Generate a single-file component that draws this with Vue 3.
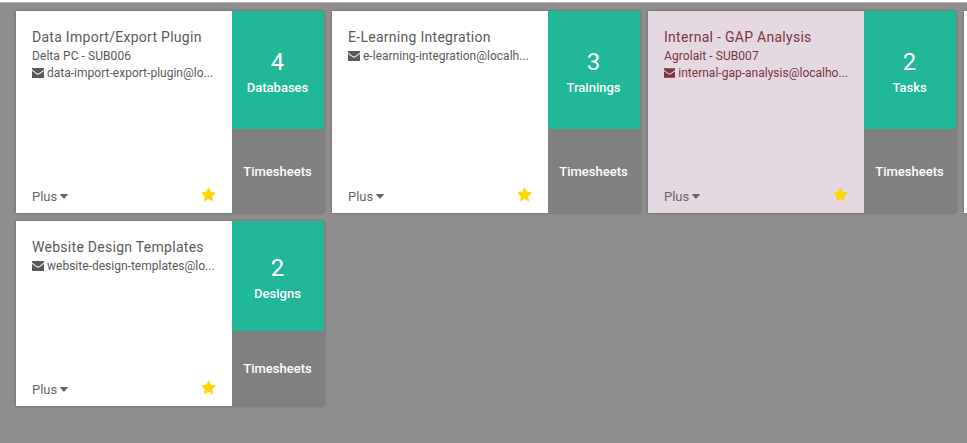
<script setup>
const projects = [
  { title: 'Data Import/Export Plugin', partner: 'Delta PC - SUB006', email: 'data-import-export-plugin@lo...', count: 4, label: 'Databases' },
  { title: 'E-Learning Integration', email: 'e-learning-integration@localh...', count: 3, label: 'Trainings' },
  { title: 'Internal - GAP Analysis', partner: 'Agrolait - SUB007', email: 'internal-gap-analysis@localho...', count: 2, label: 'Tasks', tinted: true },
  { title: '', email: '', clipped: true },
  { title: 'Website Design Templates', email: 'website-design-templates@lo...', count: 2, label: 'Designs' },
]
</script>

<template>
  <main class="board">
    <article v-for="(p, i) in projects" :key="i" class="card" :class="{ tinted: p.tinted }">
      <template v-if="!p.clipped">
        <section class="info">
          <h2>{{ p.title }}</h2>
          <div v-if="p.partner" class="line partner">{{ p.partner }}</div>
          <div class="line">
            <svg class="mail" viewBox="0 0 12 10"><path d="M0 0h12v1.6L7.2 5.2Q6 6 4.8 5.2L0 1.6z" /><path d="M0 2.8L4.3 6.1Q6 7.3 7.7 6.1L12 2.8V10H0z" /></svg>
            <span class="email">{{ p.email }}</span>
          </div>
          <footer>
            <span class="more">Plus<svg class="caret" viewBox="0 0 8 5"><path d="M.6 0h6.8q.9 0 .3.8L4.4 4.5q-.4.4-.8 0L.3.8Q-.3 0 .6 0z" /></svg></span>
            <svg class="star" viewBox="0 0 15 15"><path d="M7.5 0l2.3 4.8 5.2.7-3.8 3.7.9 5.3-4.6-2.5-4.6 2.5.9-5.3L0 5.5l5.2-.7z" /></svg>
          </footer>
        </section>
        <aside>
          <div class="tile count"><strong>{{ p.count }}</strong><span>{{ p.label }}</span></div>
          <div class="tile sheets"><span>Timesheets</span></div>
        </aside>
      </template>
    </article>
  </main>
</template>

<style>
body {
  margin: 0;
  overflow: hidden;
}
</style>

<style scoped>
.board {
  box-sizing: border-box;
  width: 967px;
  height: 443px;
  padding: 9px 0 0 16px;
  border-top: 2px solid #fff;
  background: #8f8f8f;
  box-shadow: inset 0 1px #b4b4b4;
  display: grid;
  grid-template-columns: repeat(4, 308px);
  grid-template-rows: 202px 185px;
  gap: 8px;
  overflow: hidden;
  font-family: Roboto, "Liberation Sans", sans-serif;
  color: #5a5a5d;
}
.card {
  display: flex;
  background: #fff;
  box-shadow: 0 0 3px rgba(0, 0, 0, 0.3);
}
.tinted {
  background: #e5d8e2;
  color: #7b3541;
}
.info {
  box-sizing: border-box;
  width: 216px;
  padding: 16px 16px 8px;
  display: flex;
  flex-direction: column;
}
h2 {
  margin: 0 0 1px;
  font-size: 14px;
  font-weight: 400;
  line-height: 20px;
  letter-spacing: 0.28px;
  white-space: nowrap;
}
.line {
  height: 17.3px;
  display: flex;
  align-items: center;
  font-size: 12px;
  line-height: 17px;
  letter-spacing: 0.01px;
  white-space: nowrap;
}
.partner {
  letter-spacing: 0.07px;
}
.mail {
  width: 12px;
  height: 10px;
  margin: 0 3px 1px 0;
  fill: currentColor;
}
footer {
  margin-top: auto;
  height: 18px;
  display: flex;
  justify-content: space-between;
  align-items: center;
  color: #666;
  font-size: 13px;
}
.more {
  display: flex;
  align-items: center;
}
.caret {
  width: 8px;
  height: 5px;
  margin-left: 3px;
  fill: currentColor;
}
.star {
  width: 15px;
  height: 15px;
  margin-bottom: 3px;
  fill: #ffd700;
}
aside {
  width: 92px;
  display: flex;
  flex-direction: column;
}
.tile {
  box-sizing: border-box;
  display: flex;
  flex-direction: column;
  align-items: center;
  justify-content: center;
  padding-right: 1px;
  color: #fff;
  font-size: 13px;
  font-weight: 500;
  line-height: 18px;
}
.count {
  height: 118px;
  padding-top: 3px;
  background: #21b799;
}
.card:last-child .count {
  height: 110px;
}
.count strong {
  margin-bottom: 1px;
  font-size: 24px;
  font-weight: 400;
  line-height: 32px;
}
.sheets {
  flex: 1;
  padding-top: 1px;
  background: #808080;
}
</style>
